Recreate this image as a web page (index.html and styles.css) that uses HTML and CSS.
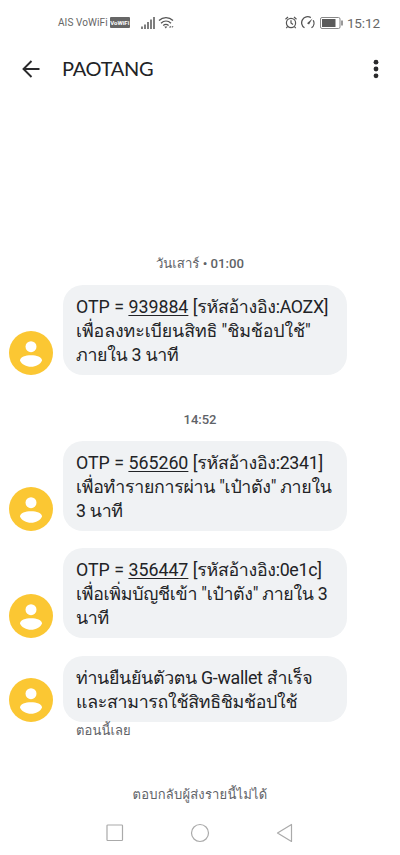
FILE: index.html
```html
<!DOCTYPE html>
<html lang="th">
<head>
  <meta charset="UTF-8" />
  <title>PAOTANG</title>
  <meta name="viewport" content="width=device-width, initial-scale=1" />
  <link rel="stylesheet" href="styles.css">
</head>
<body>
  <svg width="0" height="0" class="defs">
    <symbol id="person" viewBox="0 0 44 44">
      <circle cx="22" cy="22" r="22" fill="#fbc733" />
      <circle cx="22" cy="15.7" r="5.5" fill="#fff" />
      <path d="M11 29.500c0-3.500 5.500-5.200 11-5.200s11 1.700 11 5.200c-1.800 3.900-6 6.300-11 6.300s-9.200-2.400-11-6.300z" fill="#fff" />
    </symbol>
  </svg>

  <div class="status-bar">
    <span class="carrier">AIS VoWiFi</span>
    <span class="badge">VoWiFi</span>
    <svg class="signal" width="14" height="12" viewBox="0 0 14 12">
      <path d="M1 9.500v2.500M4 7.500V12M7 5V12M10 2.500V12M13 0V12" stroke="#555" stroke-width="1.500" />
    </svg>
    <svg class="wifi" width="16" height="13" viewBox="0 0 16 13">
      <path d="M1 4.500c4-3.900 10-3.900 14 0M3 7.200c3-2.800 7-2.800 10 0M5.200 9.600c1.700-1.500 3.700-1.500 5.400 0" fill="none" stroke="#555" stroke-width="1.300" />
      <path d="M6.300 10.500h3L7.800 12.500zM11 11.500l1.200-1.700 1.200 1.700zM13.500 10.200h2l-1 1.600z" fill="#555" />
    </svg>
    <div class="status-right">
      <svg width="12" height="13" viewBox="0 0 12 13">
        <g fill="none" stroke="#555" stroke-width="1.200">
          <circle cx="6" cy="7" r="4.600" />
          <path d="M6 4.300V7l2 1.500M.5 3.200L3 1M11.500 3.200L9 1M2.600 10.500l-1.300 1.700M9.400 10.500l1.300 1.700" />
        </g>
      </svg>
      <svg class="gauge" width="14" height="13" viewBox="0 0 14 13">
        <path d="M3.500 11.800A5.800 5.800 0 0 1 9.800 1.600M12.200 4.200a5.800 5.800 0 0 1-1.700 7.600" fill="none" stroke="#555" stroke-width="1.300" />
        <path d="M11.500 2.600L8 8.500 6 7.300z" fill="#555" />
      </svg>
      <svg class="battery" width="23" height="12" viewBox="0 0 23 12">
        <rect x=".5" y=".5" width="19.500" height="11" rx="1.500" fill="none" stroke="#888" />
        <path d="M2 2h13.500v8H2z" fill="#5a5a5a" />
        <path d="M22 3.500v5" stroke="#777" stroke-width="1.500" />
      </svg>
      <span class="clock">15:12</span>
    </div>
  </div>

  <header>
    <svg width="18" height="18" viewBox="0 0 18 18">
      <path d="M17.500 9H1.500M9.500 1L1.500 9l8 8" fill="none" stroke="#2a2a2c" stroke-width="1.900" />
    </svg>
    <h1>PAOTANG</h1>
    <svg class="more" width="6" height="20" viewBox="0 0 6 20">
      <g fill="#2a2a2c"><circle cx="3" cy="3.200" r="2.400" /><circle cx="3" cy="10" r="2.400" /><circle cx="3" cy="16.800" r="2.400" /></g>
    </svg>
  </header>

  <main>
    <div class="date">วันเสาร์ <b>• 01:00</b></div>
    <div class="message">
      <svg class="avatar"><use href="#person" /></svg>
      <div class="bubble">
        <p class="line">OTP = <u>939884</u> <span class="tight">[รหัสอ้างอิง:AOZX]</span></p>
        <p class="line snug">เพื่อลงทะเบียนสิทธิ "ชิมช้อปใช้"</p>
        <p class="line tight">ภายใน 3 นาที</p>
      </div>
    </div>

    <div class="date time"><b>14:52</b></div>
    <div class="message">
      <svg class="avatar"><use href="#person" /></svg>
      <div class="bubble">
        <p class="line">OTP = <u>565260</u> <span class="tight">[รหัสอ้างอิง:2341]</span></p>
        <p class="line tight">เพื่อทำรายการผ่าน "เป๋าตัง" ภายใน</p>
        <p class="line tight">3 นาที</p>
      </div>
    </div>
    <div class="message">
      <svg class="avatar"><use href="#person" /></svg>
      <div class="bubble">
        <p class="line">OTP = <u>356447</u> <span class="tight">[รหัสอ้างอิง:0e1c]</span></p>
        <p class="line tight">เพื่อเพิ่มบัญชีเข้า "เป๋าตัง" ภายใน 3</p>
        <p class="line tight">นาที</p>
      </div>
    </div>
    <div class="message">
      <svg class="avatar"><use href="#person" /></svg>
      <div class="bubble">
        <p class="line tight">ท่านยืนยันตัวตน G-wallet สำเร็จ</p>
        <p class="line tight">และสามารถใช้สิทธิชิมช้อปใช้</p>
      </div>
    </div>
    <div class="sent">ตอนนี้เลย</div>
  </main>

  <footer>
    <p class="notice">ตอบกลับผู้ส่งรายนี้ไม่ได้</p>
    <nav>
      <svg width="18" height="18" viewBox="0 0 18 18"><rect x="1" y="1" width="15.500" height="15.500" rx=".8" /></svg>
      <svg width="20" height="20" viewBox="0 0 20 20"><circle cx="10" cy="10" r="8.500" /></svg>
      <svg width="18" height="20" viewBox="0 0 18 20"><path d="M1.500 10L15.500 1.500v17z" stroke-linejoin="round" /></svg>
    </nav>
  </footer>
</body>
</html>
```
FILE: styles.css
```css
* {
  box-sizing: border-box;
}

body {
  margin: 0;
  height: 855px;
  overflow: hidden;
  display: flex;
  flex-direction: column;
  background: #fff;
  color: #222326;
  font-family: Roboto, Loma, Garuda, Waree, Umpush, "Noto Sans", sans-serif;
}

h1, p {
  margin: 0;
  font-weight: 400;
}

.defs {
  position: absolute;
}

.status-bar {
  height: 45px;
  padding: 0 20px 0 58px;
  display: flex;
  align-items: center;
  color: #666;
}

.carrier {
  font-size: 10px;
  letter-spacing: 0.1px;
  white-space: nowrap;
}

.badge {
  width: 20px;
  height: 11px;
  margin-left: 2px;
  border-radius: 1px;
  background: #666;
  color: #fff;
  font-size: 6px;
  font-weight: 700;
  line-height: 11px;
  text-align: center;
}

.signal {
  margin-left: 11px;
}

.wifi {
  margin-left: 3px;
}

.status-right {
  margin-left: auto;
  display: flex;
  align-items: center;
}

.gauge {
  margin-left: 4px;
}

.battery {
  margin-left: 5px;
}

.clock {
  margin-left: 4px;
  font-size: 13.5px;
  letter-spacing: -0.1px;
}

header {
  height: 48px;
  padding: 0 21px 0 22px;
  display: flex;
  align-items: center;
}

h1 {
  margin: -3px 0 0 22px;
  font-family: Lato, sans-serif;
  font-size: 20px;
  letter-spacing: -0.3px;
}

.more {
  margin-left: auto;
}

main {
  padding-top: 161px;
}

.date {
  height: 20px;
  line-height: 20px;
  margin-bottom: 11px;
  text-align: center;
  font-size: 13.2px;
  color: #5f6368;
}

.date b {
  font-weight: 500;
}

.time {
  margin-top: 35px;
  font-size: 13px;
}

.message {
  display: flex;
  align-items: flex-end;
  gap: 10px;
  padding-left: 9px;
  margin-bottom: 18px;
}

.time + .message {
  margin-bottom: 17px;
}

.avatar {
  width: 44px;
  height: 44px;
}

.bubble {
  width: 284px;
  padding: 10px 0 8px 13px;
  border-radius: 20px;
  background: #f0f2f4;
}

.line {
  height: 24px;
  line-height: 24px;
  font-size: 17.8px;
  white-space: nowrap;
}

.snug {
  letter-spacing: -0.1px;
}

.tight {
  letter-spacing: -0.3px;
}

.line u {
  text-decoration-thickness: 1px;
  text-underline-offset: 2px;
}

.sent {
  margin: -19px 0 0 76px;
  height: 20px;
  line-height: 20px;
  font-size: 13px;
  letter-spacing: 0.1px;
  color: #5f6368;
}

footer {
  margin-top: auto;
}

.notice {
  height: 20px;
  line-height: 20px;
  text-align: center;
  font-size: 13px;
  letter-spacing: 0.2px;
  color: #5f6368;
}

nav {
  height: 50px;
  padding: 5px 106px 0;
  display: flex;
  justify-content: space-between;
  align-items: center;
}

nav svg {
  fill: none;
  stroke: #aaa;
  stroke-width: 1.2;
}
```
